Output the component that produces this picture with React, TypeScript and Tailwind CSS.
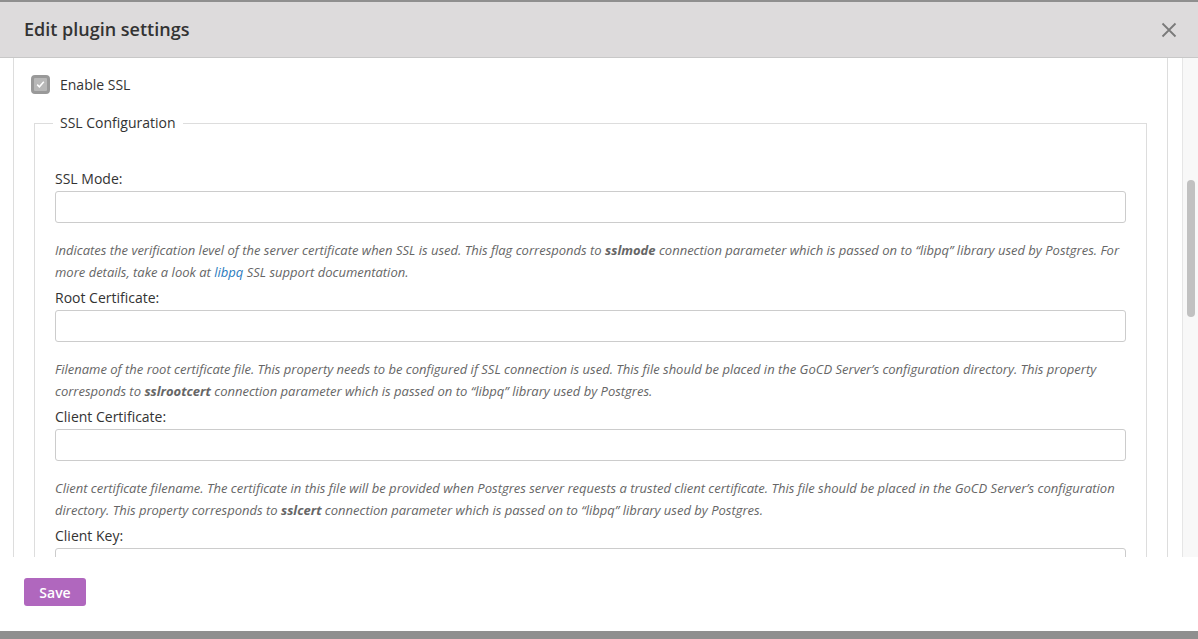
import React from 'react';

interface Field {
  label: string;
  help: React.ReactNode;
}

const fields: Field[] = [
  {
    label: 'SSL Mode:',
    help: (
      <>
        Indicates the verification level of the server certificate when SSL is used. This flag corresponds to{' '}
        <b className="font-bold">sslmode</b> connection parameter which is passed on to “libpq” library used by Postgres. For
        more details, take a look at <span className="text-[#2b7bbd]">libpq</span> SSL support documentation.
      </>
    ),
  },
  {
    label: 'Root Certificate:',
    help: (
      <>
        Filename of the root certificate file. This property needs to be configured if SSL connection is used. This file
        should be placed in the GoCD Server’s configuration directory. This property corresponds to{' '}
        <b className="font-bold">sslrootcert</b> connection parameter which is passed on to “libpq” library used by Postgres.
      </>
    ),
  },
  {
    label: 'Client Certificate:',
    help: (
      <>
        Client certificate filename. The certificate in this file will be provided when Postgres server requests a trusted
        client certificate. This file should be placed in the GoCD Server’s configuration directory. This property
        corresponds to <b className="font-bold">sslcert</b> connection parameter which is passed on to “libpq” library used
        by Postgres.
      </>
    ),
  },
  {
    label: 'Client Key:',
    help: null,
  },
];

const FieldRow: React.FC<{ field: Field }> = ({ field }) => (
  <div className="mb-[5px]">
    <label className="block text-[14px] leading-[20px] text-[#333]">{field.label}</label>
    <div className="mt-[2px] h-[32px] rounded-[3px] border border-[#cccccc] bg-white"></div>
    {field.help && (
      <p className="mt-[16px] text-[13px] leading-[22px] italic text-[#666]">{field.help}</p>
    )}
  </div>
);

export default function App() {
  return (
    <div className="w-[1198px] h-[639px] bg-[#8f8f8f] pt-[2px] font-['Open_Sans',sans-serif] overflow-hidden">
      <div className="h-[629px] bg-white flex flex-col">
        {/* header */}
        <div className="h-[56px] shrink-0 bg-[#dddbdc] border-b border-[#c8c8c8] flex items-center justify-between pl-[24px] pr-[20px]">
          <h1 className="text-[18px] font-semibold text-[#333]">Edit plugin settings</h1>
          <svg width="16" height="16" viewBox="0 0 16 16" className="mr-[1px]">
            <path d="M1.5 1.5 L14.5 14.5 M14.5 1.5 L1.5 14.5" stroke="#7a7a7a" strokeWidth="1.8" />
          </svg>
        </div>

        {/* body */}
        <div className="h-[499px] shrink-0 flex overflow-hidden">
          <div className="flex-1 pl-[13px] pr-[14px] overflow-hidden">
            <div className="w-[1155px] h-full border-x border-[#dddddd] pl-[17px] pr-[20px] pt-[17px]">
              <div className="flex items-center gap-[10px] h-[19px]">
                <div className="w-[19px] h-[19px] rounded-[4px] border-[3px] border-[#999999] bg-[#b8b8b8] flex items-center justify-center">
                  <svg width="11" height="11" viewBox="0 0 11 11">
                    <path d="M2.2 5.6 L4.4 7.8 L8.8 2.8" fill="none" stroke="white" strokeWidth="1.5" />
                  </svg>
                </div>
                <span className="text-[14px] leading-[20px] text-[#333]">Enable SSL</span>
              </div>

              <fieldset className="mt-[19px] ml-[3px] border border-[#dddddd] pl-[20px] pr-[20px] pt-[36px] pb-[20px]">
                <legend className="-ml-[2px] px-[7px] text-[14px] leading-[20px] text-[#333]">SSL Configuration</legend>
                {fields.map((f, i) => (
                  <FieldRow key={i} field={f} />
                ))}
              </fieldset>
            </div>
          </div>
          {/* scrollbar */}
          <div className="w-[16px] h-full bg-[#f8f8f8] border-l border-[#e6e6e6] flex flex-col items-center">
            <div className="mt-[122px] w-[8px] h-[137px] rounded-full bg-[#c1c1c1]"></div>
          </div>
        </div>

        {/* footer */}
        <div className="flex-1 pl-[24px] pt-[21px]">
          <button className="h-[28px] w-[62px] rounded-[3px] bg-[#b067be] text-white text-[14px] font-semibold">
            Save
          </button>
        </div>
      </div>
    </div>
  );
}
